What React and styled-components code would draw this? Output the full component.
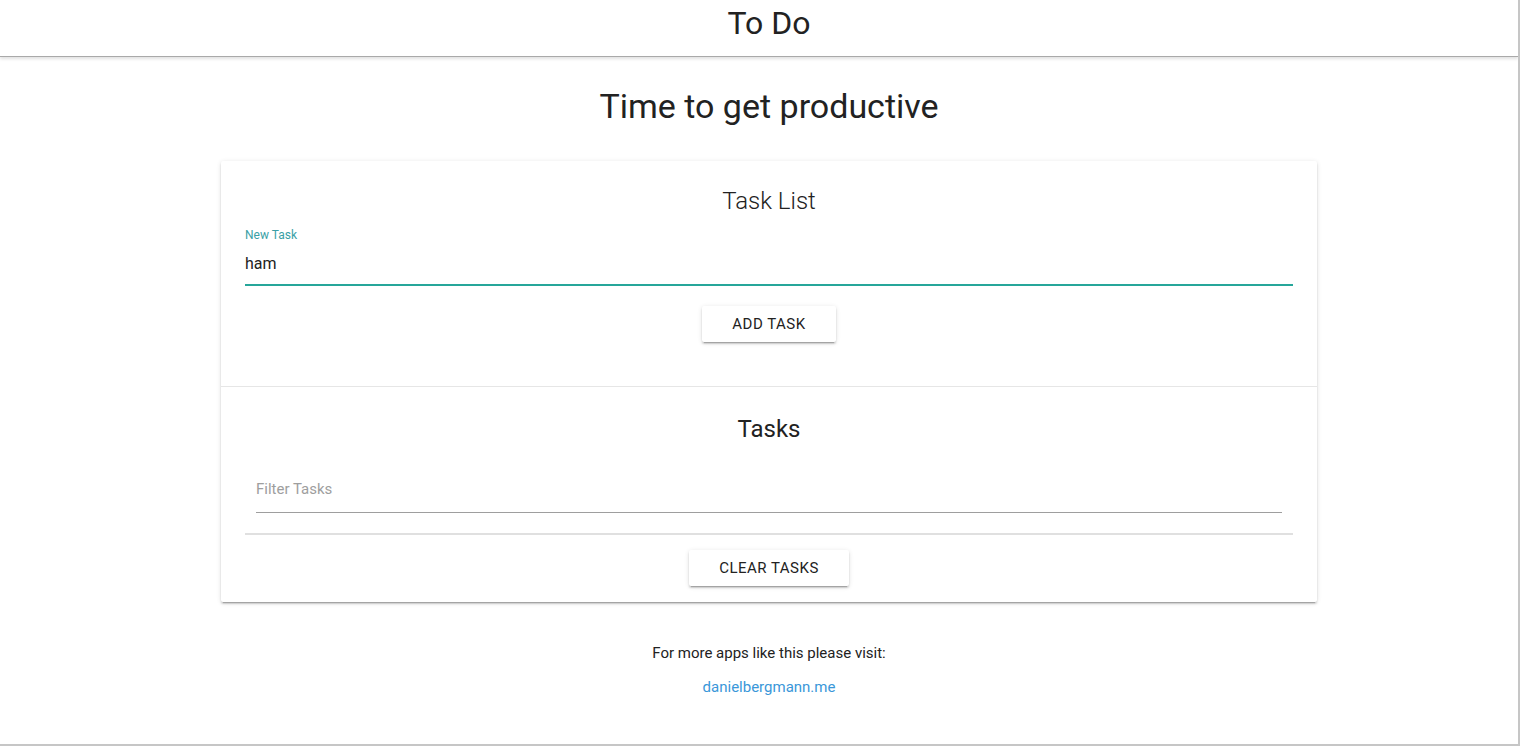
import React, { useState } from "react";
import styled, { createGlobalStyle } from "styled-components";

const Global = createGlobalStyle`
  html, body { margin: 0; padding: 0; background: #fff; }
  body { font-family: Roboto, "Liberation Sans", sans-serif; color: rgba(0,0,0,0.87); }
  * { box-sizing: border-box; }
`;

const Page = styled.div`
  width: 1520px;
  height: 746px;
  border-right: 2px solid #c6c6c6;
  border-bottom: 2px solid #c6c6c6;
  overflow: hidden;
`;

const Header = styled.header`
  height: 57px;
  padding-left: 20px;
  border-bottom: 1px solid #a9a9a9;
  box-shadow: 0 2px 3px rgba(0,0,0,0.12);
  display: flex;
  justify-content: center;
  align-items: center;
  font-size: 32px;
  font-weight: 400;
  color: #222;
  padding-bottom: 10px;
`;

const Main = styled.main`
  padding-left: 20px;
  display: flex;
  flex-direction: column;
  align-items: center;
`;

const Hero = styled.h1`
  margin: 27px 0 0;
  height: 44px;
  line-height: 44px;
  font-size: 34px;
  font-weight: 400;
  color: #222;
`;

const Card = styled.section`
  margin-top: 33px;
  width: 1096px;
  background: #fff;
  border-radius: 2px;
  box-shadow: 0 2px 2px 0 rgba(0,0,0,0.14), 0 1px 5px 0 rgba(0,0,0,0.12), 0 3px 1px -2px rgba(0,0,0,0.2);
`;

const Section = styled.div`
  padding: ${p => p.pad};
  display: flex;
  flex-direction: column;
  align-items: center;
  border-bottom: ${p => (p.divided ? "1px solid #e6e6e6" : "none")};
`;

const Title = styled.h2`
  margin: 0;
  font-size: ${p => p.size}px;
  font-weight: ${p => p.weight};
  line-height: 32px;
  color: #222;
`;

const Field = styled.div`
  align-self: stretch;
  margin: ${p => p.margin};
  display: flex;
  flex-direction: column;
`;

const Label = styled.label`
  font-size: 12px;
  color: #3a9fa6;
  line-height: 14px;
  margin-bottom: 5px;
`;

const Input = styled.input`
  border: none;
  outline: none;
  border-bottom: ${p => (p.active ? "2px solid #26a69a" : "1px solid #9e9e9e")};
  height: ${p => p.h}px;
  font-family: Roboto, "Liberation Sans", sans-serif;
  font-size: ${p => p.fs}px;
  color: #222;
  padding: 0 0 ${p => p.pb}px;
  background: transparent;
  &::placeholder { color: #9e9e9e; }
`;

const Button = styled.button`
  height: 36px;
  padding: 0 30px;
  border: none;
  border-radius: 2px;
  background: #fff;
  color: #222;
  font-family: Roboto, "Liberation Sans", sans-serif;
  font-size: 15px;
  letter-spacing: 0.5px;
  text-transform: uppercase;
  cursor: pointer;
  box-shadow: 0 2px 2px 0 rgba(0,0,0,0.14), 0 1px 5px 0 rgba(0,0,0,0.12), 0 3px 1px -2px rgba(0,0,0,0.2);
`;

const Rule = styled.div`
  align-self: stretch;
  height: 2px;
  background: #e0e0e0;
  margin: 20px 0 15px;
`;

const Footer = styled.footer`
  margin-top: 42px;
  display: flex;
  flex-direction: column;
  align-items: center;
  gap: 16px;
  font-size: 15px;
  line-height: 18px;
  color: #222;
`;

const Link = styled.a`
  color: #3a97d9;
  text-decoration: none;
`;

export default function App() {
  const [task, setTask] = useState("ham");
  const [filter, setFilter] = useState("");

  return (
    <Page>
      <Global />
      <Header>To Do</Header>
      <Main>
        <Hero>Time to get productive</Hero>
        <Card>
          <Section pad="24px 24px 44px" divided>
            <Title size={24} weight={300}>Task List</Title>
            <Field margin="11px 0 20px">
              <Label>New Task</Label>
              <Input active h={39} fs={16} pb={5} value={task} onChange={e => setTask(e.target.value)} />
            </Field>
            <Button>Add Task</Button>
          </Section>
          <Section pad="26px 24px 16px">
            <Title size={24} weight={400}>Tasks</Title>
            <Field margin="20px 11px 0">
              <Input h={48} fs={15} pb={0} placeholder="Filter Tasks" value={filter} onChange={e => setFilter(e.target.value)} />
            </Field>
            <Rule />
            <Button>Clear Tasks</Button>
          </Section>
        </Card>
        <Footer>
          <span>For more apps like this please visit:</span>
          <Link href="#">danielbergmann.me</Link>
        </Footer>
      </Main>
    </Page>
  );
}
